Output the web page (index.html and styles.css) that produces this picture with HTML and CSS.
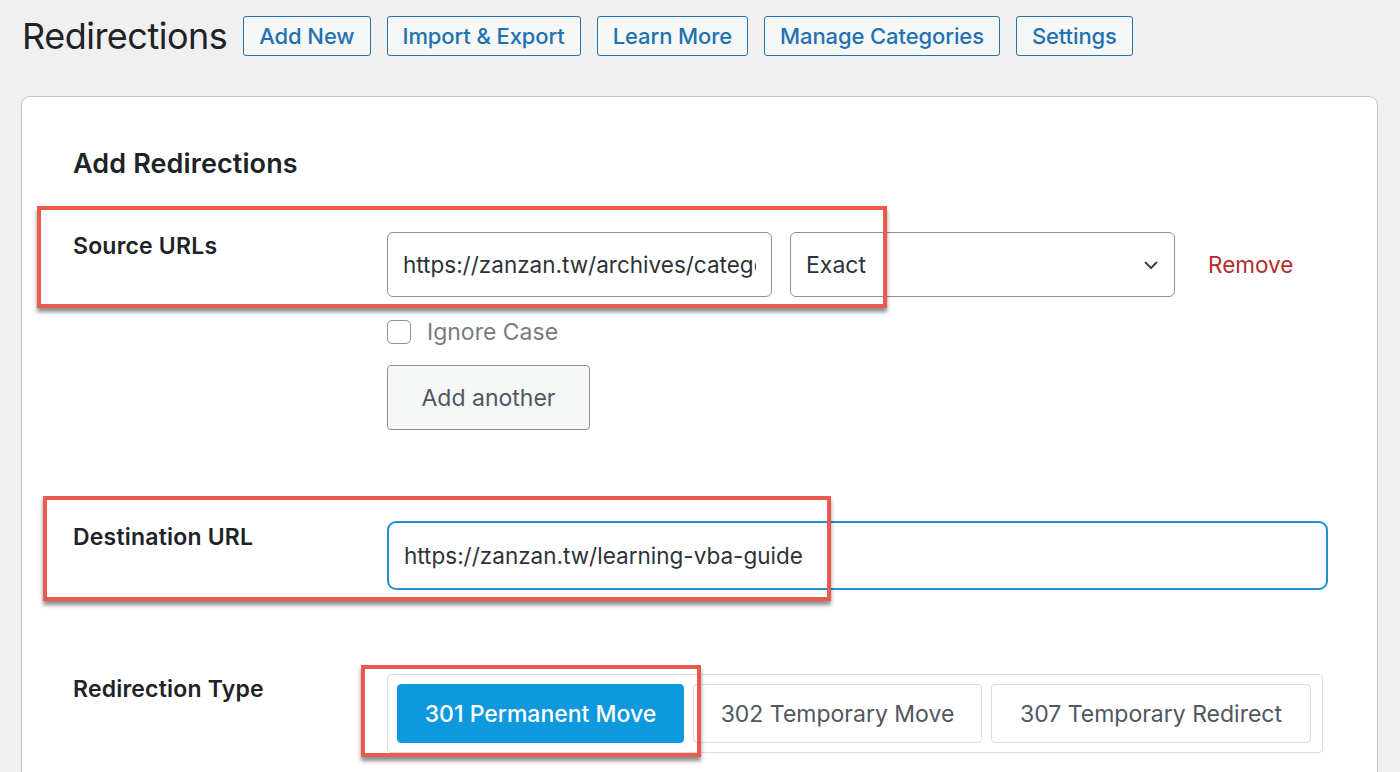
FILE: index.html
```html
<!DOCTYPE html>
<html lang="en">
<head>
<meta charset="utf-8">
<title>Redirections</title>
<link rel="stylesheet" href="styles.css">
</head>
<body>
<div class="wrap">
  <header class="page-head">
    <h1 class="page-title">Redirections</h1>
    <nav class="head-actions">
      <a class="head-btn" href="#">Add New</a>
      <a class="head-btn" href="#">Import &amp; Export</a>
      <a class="head-btn" href="#">Learn More</a>
      <a class="head-btn" href="#">Manage Categories</a>
      <a class="head-btn" href="#">Settings</a>
    </nav>
  </header>

  <section class="card">
    <h2 class="card-title">Add Redirections</h2>

    <div class="form-row row-source">
      <div class="row-label">Source URLs</div>
      <div class="row-field">
        <div class="source-line">
          <input class="text-input source-input" type="text" value="https://zanzan.tw/archives/category/vba">
          <div class="select-box">
            <span class="select-value">Exact</span>
            <svg class="chevron" width="16" height="10" viewBox="0 0 16 10"><path d="M2 2 L8 8 L14 2" fill="none" stroke="#3c434a" stroke-width="2"/></svg>
          </div>
          <a class="remove-link" href="#">Remove</a>
        </div>
        <label class="check-line">
          <span class="check-box"></span>
          <span class="check-text">Ignore Case</span>
        </label>
        <button class="plain-btn" type="button">Add another</button>
      </div>
    </div>

    <div class="form-row row-dest">
      <div class="row-label">Destination URL</div>
      <div class="row-field">
        <input class="text-input dest-input" type="text" value="https://zanzan.tw/learning-vba-guide">
      </div>
    </div>

    <div class="form-row row-type">
      <div class="row-label">Redirection Type</div>
      <div class="row-field">
        <div class="type-group">
          <button class="type-btn active" type="button">301 Permanent Move</button>
          <button class="type-btn" type="button">302 Temporary Move</button>
          <button class="type-btn wide" type="button">307 Temporary Redirect</button>
        </div>
      </div>
    </div>

    <!-- highlight frames drawn over the form -->
    <div class="mark mark-source"></div>
    <div class="mark mark-dest"></div>
    <div class="mark mark-type"></div>
  </section>
</div>
</body>
</html>
```

FILE: styles.css
```css
* { box-sizing: border-box; }

html, body {
  margin: 0;
  height: 100%;
  overflow: hidden;
}

body {
  background: #f0f0f1;
  font-family: Inter, "Noto Sans", "Liberation Sans", sans-serif;
  color: #1d2327;
}

.wrap {
  padding: 16px 22px 0 21px;
}

.page-head {
  display: flex;
  align-items: center;
  height: 40px;
}

.page-title {
  margin: 0 16px 0 1px;
  font-size: 36px;
  font-weight: 400;
  letter-spacing: -0.5px;
  color: #1d2327;
  line-height: 40px;
}

.head-actions {
  display: flex;
  gap: 16px;
}

.head-btn {
  display: inline-flex;
  align-items: center;
  height: 40px;
  padding: 0 15px;
  border: 1.5px solid #2271b1;
  border-radius: 3px;
  background: #f6f7f7;
  color: #2271b1;
  font-size: 22px;
  font-weight: 500;
  text-decoration: none;
  letter-spacing: -0.1px;
}

.card {
  position: relative;
  margin-top: 40px;
  min-height: 720px;
  background: #fff;
  border: 1.5px solid #c3c4c7;
  border-radius: 9px;
  padding: 50px 50px 0 51px;
}

.card-title {
  margin: 0;
  font-size: 27px;
  font-weight: 600;
  line-height: 34px;
  letter-spacing: 0.1px;
}

.form-row {
  display: grid;
  grid-template-columns: 314px 1fr;
}

.row-label {
  font-size: 23px;
  font-weight: 600;
  line-height: 28px;
  letter-spacing: 0.2px;
}

.row-source { margin-top: 51px; }
.row-dest { margin-top: 91px; }
.row-type { margin-top: 84px; }

.row-dest .row-label { padding-top: 2px; }
.row-type .row-label { padding-top: 1px; }

.source-line {
  display: flex;
  align-items: center;
}

.text-input {
  height: 65px;
  border: 1.5px solid #8c8f94;
  border-radius: 6px;
  padding: 0 15px;
  font-family: inherit;
  font-size: 22.5px;
  color: #2c3338;
  background: #fff;
  outline: none;
}

.source-input {
  width: 385px;
}

.select-box {
  display: flex;
  align-items: center;
  justify-content: space-between;
  width: 385px;
  height: 65px;
  margin-left: 18px;
  padding: 0 15px;
  border: 1.5px solid #8c8f94;
  border-radius: 6px;
  font-size: 23px;
  color: #2c3338;
}

.remove-link {
  margin-left: 33px;
  color: #b32d2e;
  font-size: 22.5px;
  text-decoration: none;
}

.check-line {
  display: flex;
  align-items: center;
  margin-top: 23px;
  height: 24px;
}

.check-box {
  width: 24px;
  height: 24px;
  border: 1.5px solid #8c8f94;
  border-radius: 5px;
  background: #fff;
}

.check-text {
  margin-left: 16px;
  font-size: 23px;
  color: #787c82;
}

.plain-btn {
  display: block;
  margin-top: 21px;
  width: 203px;
  height: 65px;
  border: 1.5px solid #8c8f94;
  border-radius: 4px;
  background: #f6f7f7;
  color: #50575e;
  font-family: inherit;
  font-size: 23px;
}

.dest-input {
  width: 941px;
  height: 69px;
  border: 2.5px solid #1e8fd6;
  border-radius: 9px;
}

.type-group {
  display: flex;
  gap: 9px;
  width: 936px;
  padding: 9px;
  border: 1.5px solid #dcdcde;
  border-radius: 4px;
}

.type-btn {
  width: 289px;
  height: 59px;
  border: 1px solid #dcdcde;
  border-radius: 4px;
  background: #fff;
  color: #50575e;
  font-family: inherit;
  font-size: 23px;
}

.type-btn.active {
  width: 287px;
  background: #0e98de;
  border-color: #0e98de;
  color: #fff;
  font-weight: 500;
}

.type-btn.wide { width: 320px; }

.mark {
  position: absolute;
  border: 4px solid #ea5a4f;
  box-shadow: 0 4px 4px rgba(0, 0, 0, 0.45);
  pointer-events: none;
}

.mark-source { left: 15px; top: 109px; width: 850px; height: 102px; }
.mark-dest { left: 21px; top: 399px; width: 788px; height: 105px; }
.mark-type { left: 339px; top: 568px; width: 340px; height: 92px; }
```
